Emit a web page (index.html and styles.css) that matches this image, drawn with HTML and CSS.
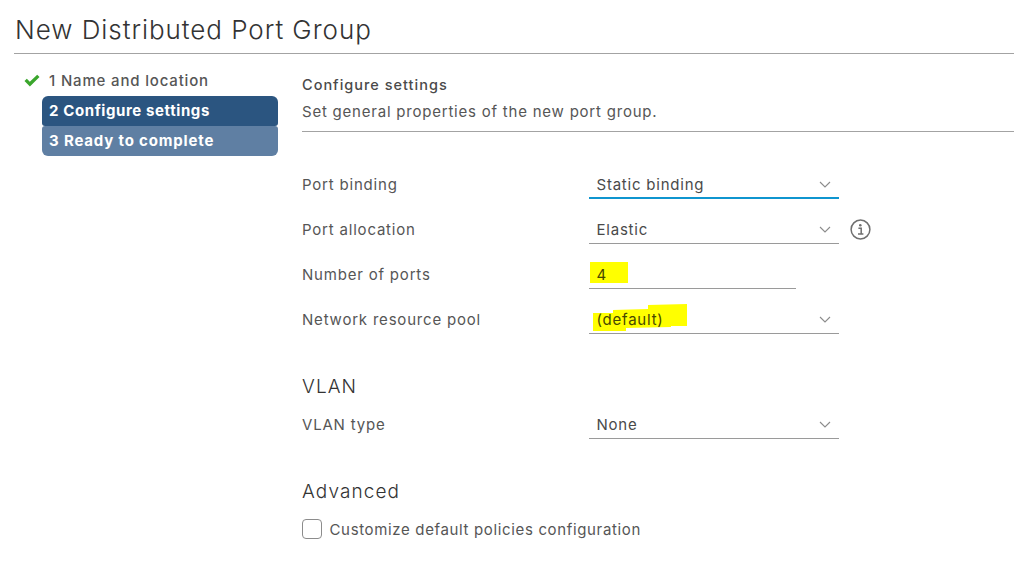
FILE: index.html
```html
<!DOCTYPE html>
<html lang="en">
<head>
<meta charset="utf-8">
<title>New Distributed Port Group</title>
<link rel="stylesheet" href="styles.css">
</head>
<body>
<header class="head"><h1 class="title">New Distributed Port Group</h1></header>
<div class="wizard">
  <nav class="steps">
    <div class="step done">
      <svg class="check" width="16" height="13" viewBox="0 0 16 13"><path d="M0.5 7 L2.8 4.8 L5.8 7.8 L13.2 0.8 L15.5 3 L5.9 12.6 Z" fill="#3aa62c"/></svg>
      <span>1 Name and location</span>
    </div>
    <div class="step current">2 Configure settings</div>
    <div class="step pending">3 Ready to complete</div>
  </nav>
  <main class="content">
    <h2 class="page-title">Configure settings</h2>
    <p class="page-sub">Set general properties of the new port group.</p>
    <div class="rows">
      <div class="row">
        <label class="lbl">Port binding</label>
        <div class="select focus"><span>Static binding</span><svg class="chev" width="12" height="7" viewBox="0 0 12 7"><path d="M1 1 L6 6 L11 1" fill="none" stroke="#8c8c8c" stroke-width="1.1"/></svg></div>
      </div>
      <div class="row">
        <label class="lbl">Port allocation</label>
        <div class="select"><span>Elastic</span><svg class="chev" width="12" height="7" viewBox="0 0 12 7"><path d="M1 1 L6 6 L11 1" fill="none" stroke="#8c8c8c" stroke-width="1.1"/></svg></div>
        <svg class="info" width="21" height="21" viewBox="0 0 21 21"><circle cx="10.5" cy="10.5" r="9.4" fill="none" stroke="#6f6f6f" stroke-width="1.5"/><circle cx="10.3" cy="6.3" r="1.3" fill="#6f6f6f"/><path d="M8.4 9.2 H11.2 V14.6 M8 14.9 H13.4" fill="none" stroke="#6f6f6f" stroke-width="1.5"/></svg>
      </div>
      <div class="row">
        <label class="lbl">Number of ports</label>
        <div class="select short"><span class="mark mark-ports"></span><span class="val">4</span></div>
      </div>
      <div class="row">
        <label class="lbl">Network resource pool</label>
        <div class="select"><svg class="mark-pool" width="121" height="28" viewBox="0 0 121 28"><path d="M1 27 L1 9 L21 9 L21 6 L56 5 L56 1 L95 0 L95 22 L79 22 L79 23 L34 24 L34 27 Z" fill="#ffff00"/></svg><span class="val">(default)</span><svg class="chev" width="12" height="7" viewBox="0 0 12 7"><path d="M1 1 L6 6 L11 1" fill="none" stroke="#8c8c8c" stroke-width="1.1"/></svg></div>
      </div>
    </div>
    <h3 class="section vlan">VLAN</h3>
    <div class="row">
      <label class="lbl">VLAN type</label>
      <div class="select"><span>None</span><svg class="chev" width="12" height="7" viewBox="0 0 12 7"><path d="M1 1 L6 6 L11 1" fill="none" stroke="#8c8c8c" stroke-width="1.1"/></svg></div>
    </div>
    <h3 class="section advanced">Advanced</h3>
    <div class="check-row"><span class="box"></span><span>Customize default policies configuration</span></div>
  </main>
</div>
</body>
</html>
```
FILE: styles.css
```css
* { box-sizing: border-box; }
html, body { margin: 0; padding: 0; }
body {
  width: 1014px;
  height: 573px;
  overflow: hidden;
  background: #fff;
  font-family: Inter, "Noto Sans", sans-serif;
  color: #565656;
}
.head {
  margin-left: 14px;
  height: 54px;
  padding: 13px 0 0 1px;
  border-bottom: 1px solid #a3a3a3;
}
.title {
  margin: 0;
  font-size: 26px;
  line-height: 34px;
  font-weight: 300;
  color: #333;
  letter-spacing: 0.95px;
}
.wizard { display: flex; }
.steps {
  width: 278px;
  padding: 12px 0 0 42px;
  flex: none;
}
.step {
  height: 30px;
  line-height: 29px;
  padding-left: 7px;
  font-size: 15px;
  letter-spacing: 0.83px;
  font-weight: 500;
  position: relative;
}
.done { color: #565656; }
.check { position: absolute; left: -18px; top: 8px; }
.current { background: #2b5580; color: #fff; font-weight: 700; letter-spacing: 0.6px; border-radius: 6px 6px 3px 3px; }
.pending { background: #5f7fa3; color: #fff; font-weight: 700; letter-spacing: 0.83px; border-radius: 3px 3px 6px 6px; }
.content { margin-left: 24px; flex: 1; padding-top: 21px; }
.page-title {
  margin: 0;
  font-size: 14.5px;
  line-height: 20px;
  font-weight: 500;
  color: #4a4a4a;
  letter-spacing: 1px;
}
.page-sub {
  margin: 7px 0 0;
  height: 30px;
  font-size: 15px;
  line-height: 20px;
  letter-spacing: 0.78px;
  border-bottom: 1px solid #a3a3a3;
}
.rows { padding-top: 33px; }
.row { display: flex; height: 45px; align-items: flex-start; }
.lbl {
  width: 287px;
  flex: none;
  font-size: 15px;
  line-height: 20px;
  padding-top: 10px;
  letter-spacing: 0.8px;
}
.select {
  width: 250px;
  height: 34px;
  padding: 10px 0 0 7.5px;
  font-size: 15px;
  line-height: 20px;
  letter-spacing: 0.78px;
  border-bottom: 1px solid #9a9a9a;
  display: flex;
  justify-content: space-between;
  position: relative;
  color: #4a4a4a;
}
.select.focus { border-bottom: 2px solid #0f95cf; }
.select.short { width: 207px; }
.val { position: relative; color: #474700; }
.chev { margin: 6px 8px 0 0; }
.info { margin: 9px 0 0 11px; }
.mark { position: absolute; background: #ffff00; }
.mark-ports { left: 1px; top: 7px; width: 38px; height: 21px; }
.mark-pool { position: absolute; left: 3px; top: 4px; }
.section {
  margin: 0;
  font-size: 19px;
  line-height: 24px;
  font-weight: 300;
  color: #333;
  letter-spacing: 1.1px;
}
.vlan { margin-top: 30px; height: 30px; }
.advanced { margin-top: 30px; height: 26px; }
.check-row {
  display: flex;
  align-items: center;
  gap: 7.5px;
  height: 24px;
  margin-top: 11px;
  font-size: 15px;
  letter-spacing: 0.65px;
}
.box {
  width: 20px;
  height: 20px;
  border: 1px solid #8c8c8c;
  border-radius: 4px;
  background: #fff;
}
```
